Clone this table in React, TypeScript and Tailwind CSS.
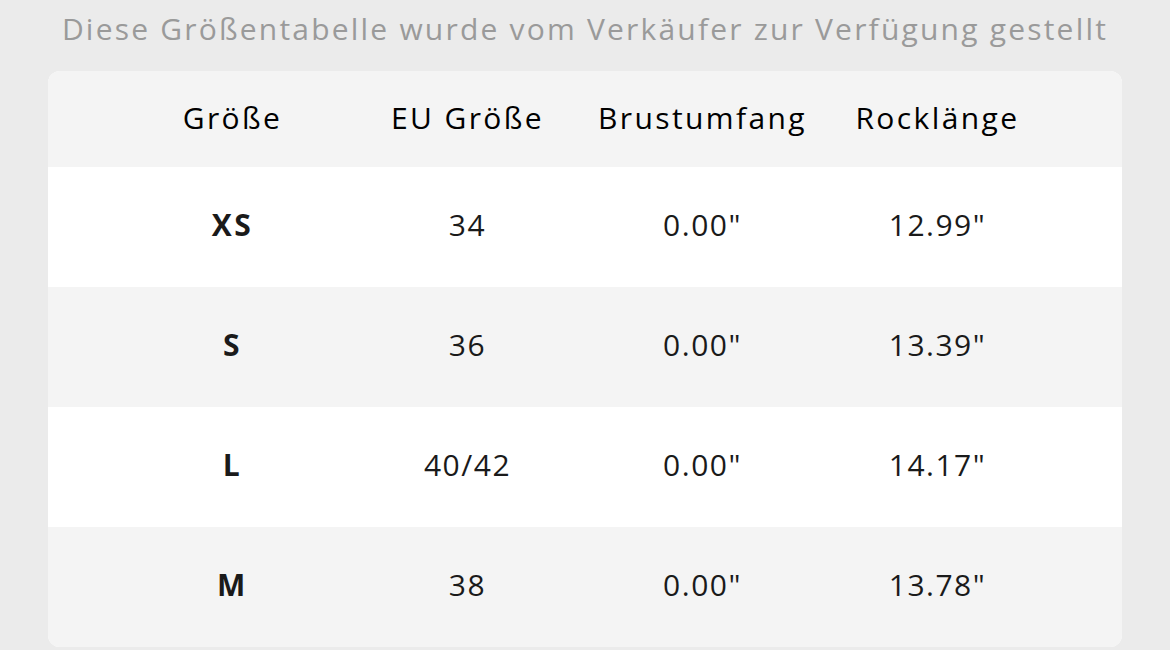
import React from "react";

const rows = [
  { size: "XS", eu: "34", brust: '0.00"', rock: '12.99"' },
  { size: "S", eu: "36", brust: '0.00"', rock: '13.39"' },
  { size: "L", eu: "40/42", brust: '0.00"', rock: '14.17"' },
  { size: "M", eu: "38", brust: '0.00"', rock: '13.78"' },
];

const App = () => {
  return (
    <div className="h-[650px] w-[1170px] overflow-hidden bg-[#ebebeb] font-['Open_Sans',sans-serif]">
      <div className="flex h-[56px] items-center justify-center text-[30px] tracking-[2.2px] text-[#9a9a9a]">
        Diese Größentabelle wurde vom Verkäufer zur Verfügung gestellt
      </div>
      <div className="mx-[48px] mt-[15px] overflow-hidden rounded-[12px] bg-white">
        <div className="grid h-[96px] grid-cols-4 items-center bg-[#f4f4f4] px-[67px] pb-[4px] text-[30px] tracking-[2.4px] text-black">
          <div className="text-center">Größe</div>
          <div className="text-center">EU Größe</div>
          <div className="text-center">Brustumfang</div>
          <div className="text-center">Rocklänge</div>
        </div>
        {rows.map((r, i) => (
          <div
            key={r.size}
            className={`grid h-[120px] grid-cols-4 items-center px-[67px] pb-[5px] text-[30px] tracking-[1.5px] text-[#1a1a1a] ${
              i % 2 === 0 ? "bg-white" : "bg-[#f4f4f4]"
            }`}
          >
            <div className="text-center font-bold tracking-[2.5px]">{r.size}</div>
            <div className="text-center">{r.eu}</div>
            <div className="text-center">{r.brust}</div>
            <div className="text-center">{r.rock}</div>
          </div>
        ))}
      </div>
    </div>
  );
};

export default App;
